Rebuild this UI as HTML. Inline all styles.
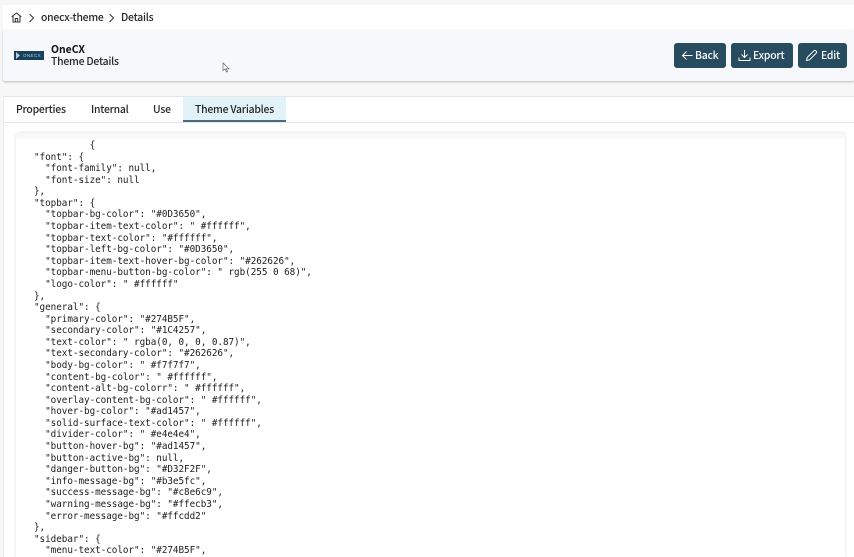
<!DOCTYPE html>
<html><head><meta charset="utf-8"><style>
*{box-sizing:border-box}
html,body{margin:0;padding:0;width:854px;height:557px;overflow:hidden;background:#f7f7f7;position:relative;font-family:"Noto Sans CJK SC","Liberation Sans",sans-serif;color:#262626}
.a{position:absolute;white-space:nowrap}
.t{font-size:10.4px;letter-spacing:-.22px;line-height:14px;color:#262626;font-weight:500}
.btn{position:absolute;top:43px;height:25px;background:#274b5f;border-radius:3px;color:#fff;font-size:10.4px;letter-spacing:-.2px;font-weight:500;line-height:24px;white-space:nowrap}
.btn svg{position:absolute;top:6px;left:7px}
.btn span{position:absolute;top:0}
pre{position:absolute;left:34px;top:140px;margin:0;font-family:"DejaVu Sans Mono",monospace;font-size:9.3px;letter-spacing:-.04px;line-height:11.58px;color:#1c1c1c}
</style></head><body>
<div class="a" style="left:3px;top:5px;width:851px;height:25px;background:#fff"></div>
<svg class="a" style="left:11px;top:12px" width="11" height="11" viewBox="0 0 11 11" fill="none" stroke="#333" stroke-width="1"><path d="M.7 4.8 5.5 1l4.8 3.8M2 4v6h7V4M4.3 10V6.5h2.4V10"/></svg>
<svg class="a" style="left:28px;top:13px" width="7" height="10" viewBox="0 0 7 10" fill="none" stroke="#333" stroke-width="1"><path d="M1.5 1l4 4-4 4"/></svg>
<div class="a t" style="left:41px;top:10px">onecx-theme</div>
<svg class="a" style="left:108px;top:13px" width="7" height="10" viewBox="0 0 7 10" fill="none" stroke="#333" stroke-width="1"><path d="M1.5 1l4 4-4 4"/></svg>
<div class="a t" style="left:121px;top:10px">Details</div>

<div class="a" style="left:3px;top:30px;width:851px;height:51px;background:#f7f8fb;box-shadow:0 1px 2px rgba(0,0,0,.25);border-radius:0 0 2px 2px"></div>
<div class="a" style="left:14px;top:51px;width:30px;height:9px;background:#17405c"></div>
<svg class="a" style="left:15px;top:52px" width="6" height="7" viewBox="0 0 6 7"><path d="M1 0l4 3.5L1 7z" fill="#b9ccd8"/></svg>
<div class="a" style="left:23px;top:52px;font:4.5px/7px 'Liberation Sans',sans-serif;letter-spacing:.4px;color:#b9ccd8">ONECX</div>
<div class="a t" style="left:51px;top:42px;font-weight:700;color:#111;letter-spacing:0">OneCX</div>
<div class="a t" style="left:51px;top:54px">Theme Details</div>
<svg class="a" style="left:222px;top:62px" width="8" height="11" viewBox="0 0 8 11"><path d="M1 1v7.5l2-1.5 1.5 3 1-.5L4.2 6.8H7z" fill="#fff" stroke="#777" stroke-width=".8"/></svg>

<div class="btn" style="left:674px;width:52px"><svg width="13" height="13" viewBox="0 0 13 13" fill="none" stroke="#fff" stroke-width="1"><path d="M11.5 6.5H1.5M5.5 2.5l-4 4 4 4"/></svg><span style="left:21px">Back</span></div>
<div class="btn" style="left:731px;width:62px"><svg width="13" height="13" viewBox="0 0 13 13" fill="none" stroke="#fff" stroke-width="1"><path d="M6.5 1v7.5M3.5 5.5l3 3 3-3M1 8.5v3h11v-3"/></svg><span style="left:22px">Export</span></div>
<div class="btn" style="left:798px;width:49px"><svg width="13" height="13" viewBox="0 0 13 13" fill="none" stroke="#fff" stroke-width="1"><path d="M1.5 11.5l.7-3L9 1.7a1.2 1.2 0 0 1 1.7 0l.6.6a1.2 1.2 0 0 1 0 1.7L4.5 10.8z"/></svg><span style="left:23px">Edit</span></div>

<div class="a" style="left:3px;top:96px;width:851px;height:461px;background:#fff;border-top:1px solid #e6e6e6;border-left:1px solid #ececec"></div>
<div class="a" style="left:3px;top:122px;width:851px;height:1px;background:#e6e6e6"></div>
<div class="a" style="left:183px;top:97px;width:103px;height:25px;background:#e1f2f9;border-bottom:2px solid #4a6c80"></div>
<div class="a t" style="left:16px;top:102px">Properties</div>
<div class="a t" style="left:91px;top:102px">Internal</div>
<div class="a t" style="left:153px;top:102px">Use</div>
<div class="a t" style="left:195px;top:102px">Theme Variables</div>

<div class="a" style="left:16px;top:133px;width:829px;height:424px;background:#fff;box-shadow:0 0 3px rgba(0,0,0,.14);border-radius:3px 3px 0 0"></div>
<div class="a" style="left:16px;top:133px;width:829px;height:6px;background:#f9f9f9;border-radius:3px 3px 0 0"></div>
<pre>          {
"font": {
  "font-family": null,
  "font-size": null
},
"topbar": {
  "topbar-bg-color": "#0D3650",
  "topbar-item-text-color": " #ffffff",
  "topbar-text-color": "#ffffff",
  "topbar-left-bg-color": "#0D3650",
  "topbar-item-text-hover-bg-color": "#262626",
  "topbar-menu-button-bg-color": " rgb(255 0 68)",
  "logo-color": " #ffffff"
},
"general": {
  "primary-color": "#274B5F",
  "secondary-color": "#1C4257",
  "text-color": " rgba(0, 0, 0, 0.87)",
  "text-secondary-color": "#262626",
  "body-bg-color": " #f7f7f7",
  "content-bg-color": " #ffffff",
  "content-alt-bg-colorr": " #ffffff",
  "overlay-content-bg-color": " #ffffff",
  "hover-bg-color": "#ad1457",
  "solid-surface-text-color": " #ffffff",
  "divider-color": " #e4e4e4",
  "button-hover-bg": "#ad1457",
  "button-active-bg": null,
  "danger-button-bg": "#D32F2F",
  "info-message-bg": "#b3e5fc",
  "success-message-bg": "#c8e6c9",
  "warning-message-bg": "#ffecb3",
  "error-message-bg": "#ffcdd2"
},
"sidebar": {
  "menu-text-color": "#274B5F",
  "menu-bg-color": "#f7f7f7",
</pre>
</body></html>
